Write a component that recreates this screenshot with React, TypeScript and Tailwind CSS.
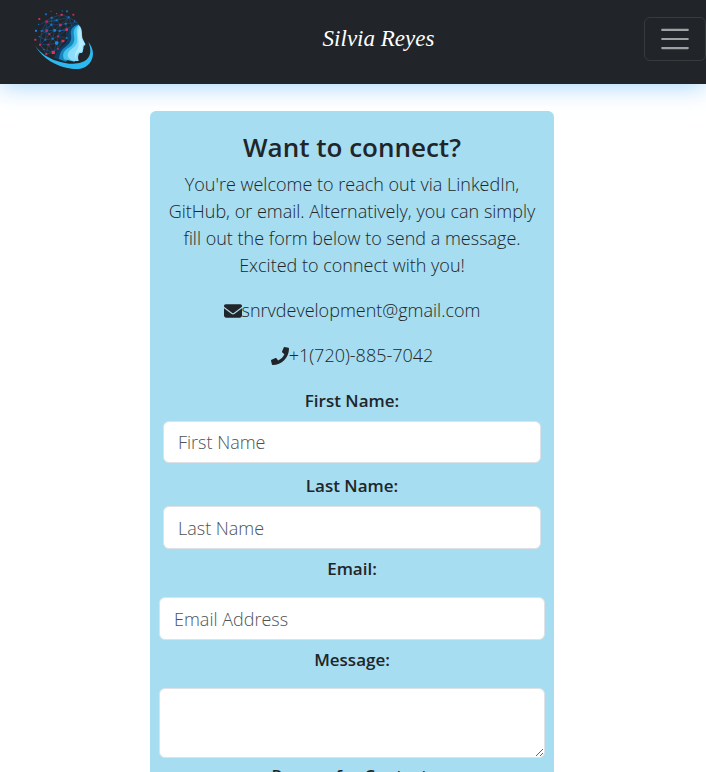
import type { ReactNode } from "react";

const nodes: [number, number, number, string][] = [
  [58, 56, 3, "#c22f58"], [78, 42, 3, "#1268c4"], [93, 33, 2, "#8a2c4d"], [110, 40, 2, "#c22f58"],
  [125, 43, 3, "#d23761"], [141, 33, 3, "#1268c4"], [127, 32, 2, "#24528b"], [160, 43, 3, "#a42f57"],
  [56, 72, 2, "#1268c4"], [80, 64, 4, "#9c2d60"], [95, 52, 3, "#1674cf"], [110, 60, 3, "#1674cf"],
  [121, 74, 4, "#c22f58"], [146, 51, 3, "#1674cf"], [164, 62, 2, "#1674cf"], [48, 91, 3, "#2188e8"],
  [65, 92, 3, "#1268c4"], [80, 91, 4, "#b22f62"], [94, 73, 3, "#1674cf"], [104, 90, 4, "#1b7fdf"],
  [88, 101, 3, "#b22f62"], [119, 92, 3, "#1674cf"], [140, 88, 4, "#d23761"], [137, 70, 3, "#1674cf"],
  [46, 118, 3, "#c22f58"], [58, 109, 2, "#1268c4"], [60, 133, 3, "#c22f58"], [76, 118, 3, "#1268c4"],
  [98, 115, 3, "#1674cf"], [110, 128, 5, "#1b88e8"], [129, 122, 4, "#d23761"], [141, 113, 3, "#1674cf"],
  [85, 133, 3, "#9c2d60"], [79, 161, 3, "#c22f58"], [100, 156, 5, "#d83363"], [114, 146, 3, "#a42f57"],
  [72, 147, 2, "#1674cf"], [114, 108, 3, "#b22f62"], [156, 78, 3, "#1674cf"],
];

function Logo() {
  return (
    <svg viewBox="42 26 177 183" className="h-[61px] w-[59px]" aria-hidden="true">
      <g stroke="#1763ae" strokeWidth="1.3" fill="none">
        <path d="M62 72 95 52 125 43 146 51 172 66 137 70 121 74 110 60 80 64 65 92 60 133 79 161 100 156 114 146 129 122 141 113 140 88 156 78 164 62M95 52 110 60 146 51 137 70 140 88 119 92 121 74 94 73 80 64 80 91 94 73 104 90 121 74M65 92 80 91 104 90 119 92 114 108 98 115 88 101 80 91 76 118 60 133 85 133 79 161M58 109 76 118 88 101 104 90 98 115 110 128 129 122 114 108 141 113M76 118 98 115 85 133 110 128 100 156 85 133M60 133 72 147 100 156 129 122M110 128 114 146M80 64 110 60 94 73 65 92 88 101M95 52 94 73M121 74 146 51 156 78 119 92 140 88 114 108 110 128M58 109 80 91M125 43 110 60" />
      </g>
      {nodes.map(([x, y, r, fill]) => (
        <rect key={`${x}-${y}`} x={x - r} y={y - r} width={r * 2} height={r * 2} rx={r / 2} fill={fill} />
      ))}
      <path fill="#0b3d66" d="M174 67C152 72 142 86 143 104c1 16-5 26-16 33-13 9-19 20-25 35l22 9 30-6 24-80z" />
      <path fill="#1787bd" d="M176 72c-18 5-26 16-23 33 3 16-5 27-17 35-12 8-17 19-19 36l20 8 26-20 16-70z" />
      <path fill="#45c5f0" d="M177 74c-13 5-18 17-15 32 4 18-4 29-17 37-14 8-19 19-13 34l32 7 14-40z" />
      <path fill="#8ddcfa" d="M176 74c6 4 10 14 10 24 0 11 1 16 4 21l6 12c1 3-1 5-5 5 1 3 0 4-1 6 1 3 0 4-1 6 1 8-3 11-10 10-5 5-6 14-3 24-18 2-33-5-33-18 0-15 24-21 28-38 4-17-7-32 5-52z" />
      <path fill="#b5ebff" d="M179 80c6 8 2 24 8 38l7 13-6 4-1 12c-1 7-4 9-12 8-7 7-8 14-7 21-7-12-1-20 5-31 10-20-7-42 6-65z" />
      <path
        fill="#2bb9f0"
        d="M45 136c18 23 39 37 64 45 27 9 56 13 76 5 26-9 32-32 20-61 16 20 19 42 5 62-12 16-30 21-55 18-45-5-87-31-110-69z"
      />
    </svg>
  );
}

const control =
  "block w-full rounded-md border border-[#dee2e6] bg-white px-3.5 text-[18px] font-light text-[#212529] placeholder:text-[#4d5358] placeholder:opacity-100";

function Label({ id, children }: { id: string; children: ReactNode }) {
  return (
    <label htmlFor={id} className="block text-center text-[17px] leading-[27px] font-semibold">
      {children}
    </label>
  );
}

export default function App() {
  return (
    <div className="h-screen overflow-hidden bg-white font-['Open_Sans','Noto_Sans',sans-serif] text-[#212529]">
      <header className="flex h-[84px] items-center justify-between bg-[#212529] pb-1.5 shadow-[0_2px_24px_#a3d5fa]">
        <a href="#home" aria-label="Home" className="flex w-[113px] pl-[34px]">
          <Logo />
        </a>
        <a href="#home" className="font-['Liberation_Serif',serif] text-[23px] leading-8 font-medium text-white italic">
          Silvia Reyes
        </a>
        <button
          type="button"
          aria-label="Toggle navigation"
          className="flex h-11 w-[62px] items-center justify-center rounded-md border border-[#373b3e] text-[#a0a1a3]"
        >
          <svg viewBox="0 0 30 30" className="size-8" fill="none" stroke="currentColor" strokeWidth="2" strokeLinecap="round">
            <path d="M3 6.5h24M3 15h24M3 23.5h24" />
          </svg>
        </button>
      </header>

      <main className="pt-[27px] pr-0.5">
        <section className="mx-auto w-[404px] max-w-full rounded-md bg-[#a6ddf0] px-[9px] pt-5 pb-6">
          <h1 className="mb-2 text-center text-[26px] leading-8 font-semibold">Want to connect?</h1>
          <p className="mb-[18px] px-1 text-center text-[18px] leading-[27px] font-light">
            You're welcome to reach out via LinkedIn, GitHub, or email. Alternatively, you can simply fill out the form
            below to send a message. Excited to connect with you!
          </p>
          <p className="mb-[18px] flex items-center justify-center text-[18px] leading-[27px] font-light">
            <svg viewBox="0 0 512 512" className="size-[18px]" fill="currentColor" aria-hidden="true">
              <path d="M48 64C21.500 64 0 85.500 0 112c0 15.100 7.100 29.300 19.200 38.400L236.800 313.600c11.400 8.500 27 8.500 38.400 0L492.800 150.400c12.100-9.100 19.200-23.300 19.200-38.400 0-26.500-21.500-48-48-48zM0 176v208c0 35.300 28.700 64 64 64h384c35.300 0 64-28.700 64-64V176L294.400 339.200c-22.800 17.100-54 17.100-76.800 0z" />
            </svg>
            <a href="mailto:snrvdevelopment@gmail.com">snrvdevelopment@gmail.com</a>
          </p>
          <p className="mb-[18px] flex items-center justify-center text-[18px] leading-[27px] font-light">
            <svg viewBox="0 0 512 512" className="size-[18px]" fill="currentColor" aria-hidden="true">
              <path d="M493.400 24.600l-104-24c-11.300-2.600-22.900 3.300-27.500 13.900l-48 112c-4.200 9.800-1.400 21.300 6.900 28l60.600 49.600c-36 76.700-98.900 140.500-177.200 177.200l-49.600-60.600c-6.800-8.300-18.200-11.100-28-6.900l-112 48C3.900 366.500-2 378.100.6 389.400l24 104C27.100 504.200 36.700 512 48 512c256.100 0 464-207.500 464-464 0-11.200-7.700-20.900-18.600-23.400z" />
            </svg>
            <a href="tel:+17208857042">+1(720)-885-7042</a>
          </p>
          <form>
            <div className="px-1">
              <Label id="first">First Name:</Label>
              <input id="first" placeholder="First Name" className={`${control} mt-[7px] mb-[9px] h-[42px]`} />
              <Label id="last">Last Name:</Label>
              <input id="last" placeholder="Last Name" className={`${control} mt-[7px] mb-1.5 h-[43px]`} />
            </div>
            <Label id="email">Email:</Label>
            <input id="email" type="email" placeholder="Email Address" className={`${control} mt-[15px] mb-1.5 h-[43px]`} />
            <Label id="message">Message:</Label>
            <textarea id="message" className={`${control} mt-[15px] mb-1 h-[70px] resize py-2`} />
            <Label id="reason">Reason for Contact:</Label>
            <select id="reason" className={`${control} mt-[15px] mb-4 h-[43px]`}>
              <option></option>
            </select>
          </form>
        </section>
      </main>
    </div>
  );
}
